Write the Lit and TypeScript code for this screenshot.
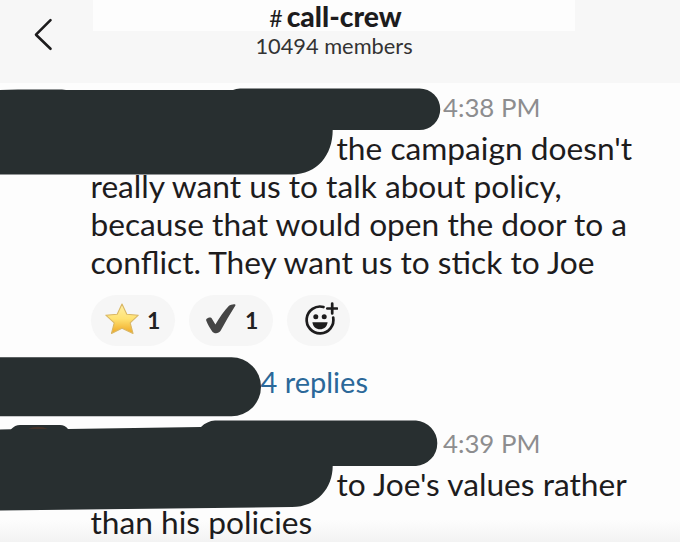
import { LitElement, html, css, svg } from "lit";
import { customElement, property } from "lit/decorators.js";

@customElement("channel-header")
class ChannelHeader extends LitElement {
  static styles = css`
    :host { display: flex; justify-content: center; height: 83px; background: #f7f7f7; position: relative; }
    .back { position: absolute; left: 33px; top: 17px; }
    .patch { width: 482px; height: 31px; background: #fdfdfd; margin-left: -12px; }
    .titles { position: absolute; left: 0; right: 12px; top: 0; text-align: center; color: #1d1c1d; }
    .name { font-size: 28.3px; line-height: 32px; height: 32px; font-weight: 900; white-space: nowrap; padding-left: 3px; }
    .hash { font-weight: 400; font-size: 23px; margin-right: 4px; }
    .members { font-size: 21.8px; line-height: 28px; white-space: nowrap; color: #333; }
  `;
  render() {
    return html`
      <div class="patch"></div>
      <svg class="back" width="22" height="36" viewBox="0 0 22 36" fill="none" stroke="#1d1c1d" stroke-width="2.6" stroke-linecap="round" stroke-linejoin="round">
        <path d="M17.5 3.2 3 17.7 17.5 31.8" />
      </svg>
      <div class="titles">
        <div class="name"><span class="hash">#</span><span class="label">call-crew</span></div>
        <div class="members"><span>10494 members</span></div>
      </div>
    `;
  }
}

@customElement("chat-message")
class ChatMessage extends LitElement {
  @property() time = "";
  @property({ attribute: false }) lines: string[] = [];
  static styles = css`
    :host { display: block; padding-left: 90.5px; }
    .time { padding-left: 352.5px; height: 46px; line-height: 48px; font-size: 25.8px; color: #8d8d8f; }
    .line { font-size: 31.7px; line-height: 38px; height: 38px; color: #1d1c1d; white-space: nowrap; }
    .first { padding-left: 246px; }
  `;
  render() {
    return html`
      <div class="time"><span>${this.time}</span></div>
      ${this.lines.map((l, i) => html`<div class="line ${i ? "" : "first"}"><span>${l}</span></div>`)}
    `;
  }
}

const star = svg`
  <defs><linearGradient id="gold" x1="0" y1="0" x2="0" y2="1">
    <stop offset="0" stop-color="#fff0a8" /><stop offset=".5" stop-color="#ffe272" /><stop offset="1" stop-color="#efa722" />
  </linearGradient></defs>
  <path d="M17 2 21.8 12.2 33.3 13.2 25.2 20.8 28 31.5 17 26.3 6.5 31.5 9.2 20.8 .8 13.2 12.2 12.2Z" fill="url(#gold)" stroke="#d9b765" stroke-width="1.1" stroke-linejoin="round" />`;
const check = svg`
  <path d="M3.2 18.4C2.6 16.6 7.6 14.2 8.8 16.6L12.4 22.6C16.6 15.6 21.2 8.6 26 3.8 27.4 2.6 33.4 1.2 32.4 3.6 27 12 22 21 17.6 28.8 15.8 31.8 11 32 9.2 29.4 6.8 25.8 4.8 22.4 3.2 18.4Z" fill="#454545" />`;
const addFace = svg`
  <g fill="none" stroke="#1d1c1d" stroke-width="2.7" stroke-linecap="round">
    <path d="M20.5 5A13.4 13.4 0 1 0 30.2 15.5" />
    <path d="M29.2 1.6v9.8M24.3 6.5h9.8" />
  </g>
  <g fill="#1d1c1d"><circle cx="12.8" cy="14.8" r="2.5" /><circle cx="21.2" cy="14.8" r="2.5" />
  <path d="M9.4 20.2h15.2c-.5 4.4-3.7 7-7.6 7s-7.1-2.6-7.6-7Z" /></g>`;

@customElement("reaction-bar")
class ReactionBar extends LitElement {
  static styles = css`
    :host { display: flex; gap: 14px; padding: 14px 0 0 91px; height: 51px; }
    .pill { display: flex; align-items: center; box-sizing: border-box; height: 51px; width: 84px; border-radius: 26px; background: #f6f6f6; padding-left: 14px; gap: 8px; }
    .count { font-size: 23px; font-weight: 700; color: #222; line-height: 50px; margin-top: -2px; }
    .add { width: 63px; padding-left: 16px; }
    svg { display: block; margin-top: -4px; flex: none; }
  `;
  render() {
    return html`
      <div class="pill"><svg width="34" height="34" viewBox="0 0 34 34">${star}</svg><span class="count">1</span></div>
      <div class="pill"><svg width="34" height="34" viewBox="0 0 34 34">${check}</svg><span class="count">1</span></div>
      <div class="pill add"><svg width="35" height="34" viewBox="0 0 35 34">${addFace}</svg></div>
    `;
  }
}

@customElement("app-root")
class AppRoot extends LitElement {
  static styles = css`
    :host { display: block; position: relative; width: 680px; height: 542px; overflow: hidden; background: linear-gradient(#fdfdfd 520px, #f3f3f3 542px); font-family: Lato, sans-serif; }
    .replies { padding: 17px 0 18px 260.5px; font-size: 29px; line-height: 38px; height: 38px; color: #2b6899; }
    .marker { position: absolute; left: 0; top: 0; }
  `;
  render() {
    return html`
      <channel-header></channel-header>
      <chat-message time="4:38 PM" .lines=${["the campaign doesn't", "really want us to talk about policy,", "because that would open the door to a", "conflict. They want us to stick to Joe"]}></chat-message>
      <reaction-bar></reaction-bar>
      <div class="replies"><span>4 replies</span></div>
      <chat-message time="4:39 PM" .lines=${["to Joe's values rather", "than his policies"]}></chat-message>
      <svg class="marker" width="680" height="542" viewBox="0 0 680 542" fill="#282f30">
        <path d="M0 90 18 89.4H62L66 90H233Q236 88.6 240 88.5H419.5A20.5 20.5 0 0 1 419.5 130H332.7C332.7 155 317 174.5 292 174.5H0Z" />
        <path d="M0 357.3H231.5A29.5 29.5 0 0 1 231.5 416.3H0Z" />
        <path d="M0 429.6 11 429.3Q15 425 20 425H60Q65 425 68 429L201 427Q207 421 215 420.5H416A22.8 22.8 0 0 1 416 466H332.7C332.7 488 317 507 292 507L0 510.5Z" />
        <path d="M28 429Q38 424.5 48 429Z" fill="#44332a" />
      </svg>
    `;
  }
}
